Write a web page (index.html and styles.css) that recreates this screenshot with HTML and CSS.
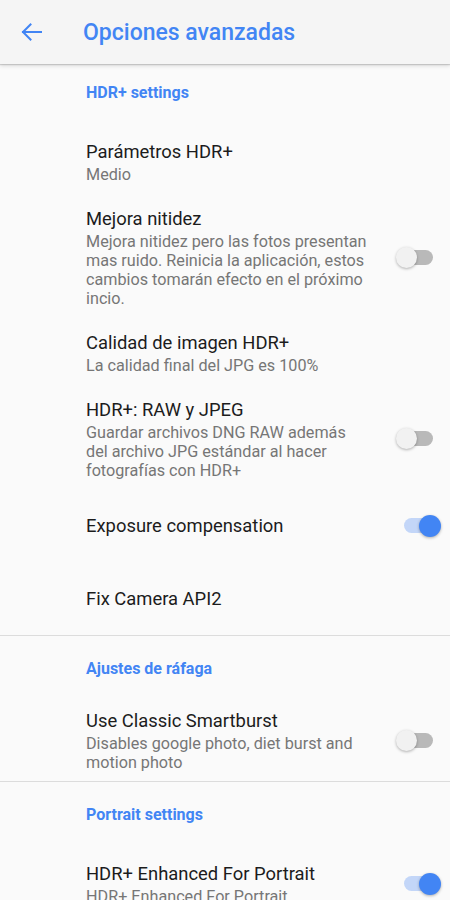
FILE: index.html
```html
<!DOCTYPE html>
<html lang="es">
<head>
<meta charset="utf-8">
<title>Opciones avanzadas</title>
<link rel="stylesheet" href="styles.css">
</head>
<body>
<header class="appbar">
  <span class="back">
    <svg width="24" height="24" viewBox="0 0 24 24" fill="none" stroke="#4285f4" stroke-width="2" stroke-linecap="square">
      <path d="M3 12H21"/>
      <path d="M10.5 4.5L3 12L10.5 19.5"/>
    </svg>
  </span>
  <h1 class="title">Opciones avanzadas</h1>
</header>
<main class="list">
  <section class="section">
    <div class="cat cat-first">HDR+ settings</div>
    <div class="item">
      <div class="text">
        <div class="t">Parámetros HDR+</div>
        <div class="s">Medio</div>
      </div>
    </div>
    <div class="item">
      <div class="text">
        <div class="t">Mejora nitidez</div>
        <div class="s">Mejora nitidez pero las fotos presentan mas ruido. Reinicia la aplicación, estos cambios tomarán efecto en el próximo incio.</div>
      </div>
      <div class="widget"><span class="sw"></span></div>
    </div>
    <div class="item">
      <div class="text">
        <div class="t">Calidad de imagen HDR+</div>
        <div class="s">La calidad final del JPG es 100%</div>
      </div>
    </div>
    <div class="item">
      <div class="text">
        <div class="t">HDR+: RAW y JPEG</div>
        <div class="s">Guardar archivos DNG RAW además del archivo JPG estándar al hacer fotografías con HDR+</div>
      </div>
      <div class="widget"><span class="sw"></span></div>
    </div>
    <div class="item single">
      <div class="text">
        <div class="t">Exposure compensation</div>
      </div>
      <div class="widget"><span class="sw on"></span></div>
    </div>
    <div class="item single">
      <div class="text">
        <div class="t">Fix Camera API2</div>
      </div>
    </div>
  </section>
  <section class="section">
    <div class="cat">Ajustes de ráfaga</div>
    <div class="item">
      <div class="text">
        <div class="t">Use Classic Smartburst</div>
        <div class="s">Disables google photo, diet burst and motion photo</div>
      </div>
      <div class="widget"><span class="sw"></span></div>
    </div>
  </section>
  <section class="section">
    <div class="cat cat-last">Portrait settings</div>
    <div class="item">
      <div class="text">
        <div class="t">HDR+ Enhanced For Portrait</div>
        <div class="s">HDR+ Enhanced For Portrait</div>
      </div>
      <div class="widget"><span class="sw on"></span></div>
    </div>
  </section>
</main>
</body>
</html>
```
FILE: styles.css
```css
* { box-sizing: border-box; }
html, body { margin: 0; padding: 0; }
body {
  background: #fafafa;
  font-family: Roboto, "Noto Sans", sans-serif;
  width: 450px;
  height: 900px;
  overflow: hidden;
}
.appbar {
  position: relative;
  z-index: 2;
  height: 64px;
  background: #f5f5f5;
  display: flex;
  align-items: center;
  box-shadow: 0 1px 1px rgba(0,0,0,0.14), 0 2px 4px rgba(0,0,0,0.12);
}
.back {
  width: 83px;
  padding-left: 20px;
  display: flex;
  align-items: center;
}
.title {
  margin: 0;
  font-size: 23px;
  font-weight: 500;
  color: #4285f4;
}
.section {
  border-bottom: 1px solid #dcdcdc;
}
.section:last-child { border-bottom: none; }
.cat {
  padding: 23px 0 16px 86px;
  font-size: 16px;
  line-height: 20px;
  font-weight: 700;
  color: #4285f4;
}
.cat-first { padding-top: 19px; padding-bottom: 23px; }
.cat-last { padding-bottom: 23px; }
.item {
  display: flex;
  align-items: center;
  padding: 13.5px 0 9px 86px;
}
.item.single {
  min-height: 73px;
  padding-top: 0;
  padding-bottom: 0;
}
.text { flex: 1; min-width: 0; }
.t {
  font-size: 18.4px;
  line-height: 24px;
  color: #1c1c1c;
}
.s {
  margin-top: 1.5px;
  font-size: 16.2px;
  line-height: 19px;
  color: #767676;
}
.widget {
  width: 81px;
  flex: none;
  display: flex;
  align-items: center;
}
.sw {
  position: relative;
  display: block;
  width: 29px;
  height: 15px;
  margin-left: 35px;
  border-radius: 8px;
  background: #b9b9b9;
}
.sw::after {
  content: "";
  position: absolute;
  top: 50%;
  left: -8px;
  width: 21px;
  height: 21px;
  margin-top: -10.5px;
  border-radius: 50%;
  background: #f1f1f1;
  box-shadow: 0 1px 3px rgba(0,0,0,0.3);
}
.sw.on { background: #c3d6f8; }
.sw.on::after {
  left: 15px;
  width: 22px;
  height: 22px;
  margin-top: -11px;
  background: #4285f4;
}
```
